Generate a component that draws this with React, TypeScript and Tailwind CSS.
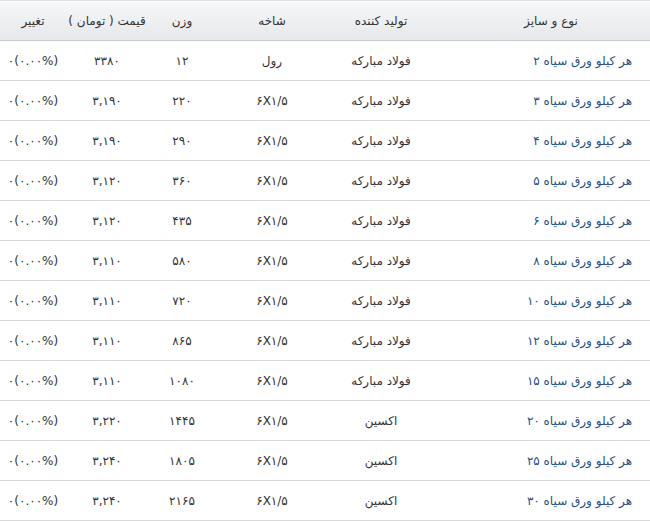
const rows = [
  { size: '۲', maker: 'فولاد مبارکه', branch: 'رول', weight: '۱۲', price: '۳۳۸۰' },
  { size: '۳', maker: 'فولاد مبارکه', branch: '۶X۱/۵', weight: '۲۲۰', price: '۳,۱۹۰' },
  { size: '۴', maker: 'فولاد مبارکه', branch: '۶X۱/۵', weight: '۲۹۰', price: '۳,۱۹۰' },
  { size: '۵', maker: 'فولاد مبارکه', branch: '۶X۱/۵', weight: '۳۶۰', price: '۳,۱۲۰' },
  { size: '۶', maker: 'فولاد مبارکه', branch: '۶X۱/۵', weight: '۴۳۵', price: '۳,۱۲۰' },
  { size: '۸', maker: 'فولاد مبارکه', branch: '۶X۱/۵', weight: '۵۸۰', price: '۳,۱۱۰' },
  { size: '۱۰', maker: 'فولاد مبارکه', branch: '۶X۱/۵', weight: '۷۲۰', price: '۳,۱۱۰' },
  { size: '۱۲', maker: 'فولاد مبارکه', branch: '۶X۱/۵', weight: '۸۶۵', price: '۳,۱۱۰' },
  { size: '۱۵', maker: 'فولاد مبارکه', branch: '۶X۱/۵', weight: '۱۰۸۰', price: '۳,۱۱۰' },
  { size: '۲۰', maker: 'اکسین', branch: '۶X۱/۵', weight: '۱۴۴۵', price: '۳,۲۲۰' },
  { size: '۲۵', maker: 'اکسین', branch: '۶X۱/۵', weight: '۱۸۰۵', price: '۳,۲۴۰' },
  { size: '۳۰', maker: 'اکسین', branch: '۶X۱/۵', weight: '۲۱۶۵', price: '۳,۲۴۰' },
];

// column widths, right to left
const cols = 'grid grid-cols-[216px_106px_112px_68px_82px_66px]';

export default function App() {
  return (
    <div
      dir="rtl"
      className="w-[650px] h-[521px] bg-white overflow-hidden text-[12px] text-[#333]"
      style={{ fontFamily: '"DejaVu Sans", Tahoma, sans-serif' }}
    >
      {/* Header */}
      <div
        className={`${cols} h-[41px] items-center border-t border-t-[#dcdee2] border-b border-b-[#c9cacc] bg-gradient-to-b from-[#f6f7f8] to-[#e7e8eb] shadow-[inset_0_1px_0_#ffffff]`}
      >
        <div className="text-center pl-[18px]">نوع و سایز</div>
        <div className="text-center">تولید کننده</div>
        <div className="text-center">شاخه</div>
        <div className="text-center">وزن</div>
        <div className="text-center">قیمت ( تومان )</div>
        <div className="text-center">تغییر</div>
      </div>

      {/* Rows */}
      {rows.map((r, i) => (
        <div key={i} className={`${cols} h-[40px] items-center border-b border-[#d9d9d9]`}>
          <div className="pr-[18px] text-[#24508a]">هر کیلو ورق سیاه {r.size}</div>
          <div className="text-center">{r.maker}</div>
          <div className="text-center" dir="ltr">{r.branch}</div>
          <div className="text-center">{r.weight}</div>
          <div className="text-center">{r.price}</div>
          <div className="text-center" dir="ltr">۰(۰.۰۰%)</div>
        </div>
      ))}
    </div>
  );
}
